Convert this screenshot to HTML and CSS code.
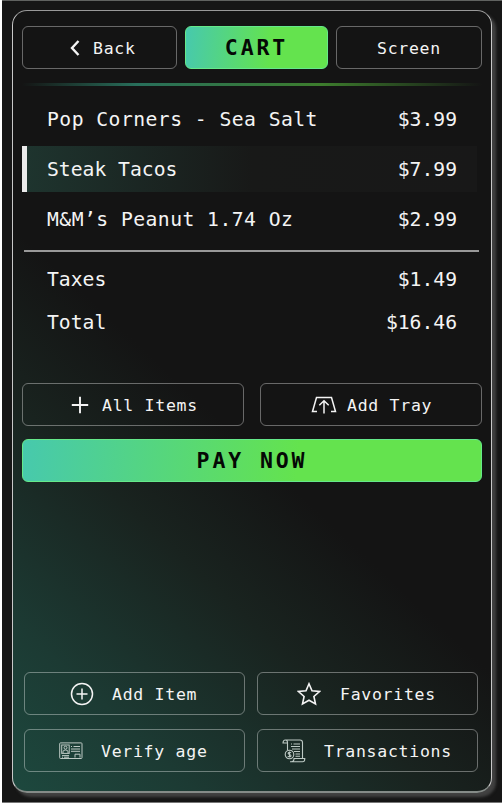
FILE: index.html
```html
<!DOCTYPE html>
<html lang="en">
<head>
<meta charset="utf-8">
<title>Cart</title>
<link rel="stylesheet" href="styles.css">
</head>
<body>
<main class="card">
  <header class="tabs">
    <button class="btn back"><svg width="10" height="16" viewBox="0 0 10 16"><path d="M8.5 1 2 8l6.500 7" stroke-width="2.400"/></svg><span>Back</span></button>
    <button class="btn accent cart">CART</button>
    <button class="btn screen"><span>Screen</span></button>
  </header>
  <div class="glow"></div>
  <section class="items">
    <div class="row"><span class="wide">Pop Corners - Sea Salt</span><span>$3.99</span></div>
    <div class="row selected"><span>Steak Tacos</span><span>$7.99</span></div>
    <div class="row"><span class="wide">M&amp;M’s Peanut 1.74 Oz</span><span>$2.99</span></div>
  </section>
  <section class="totals">
    <div class="row"><span>Taxes</span><span>$1.49</span></div>
    <div class="row"><span>Total</span><span>$16.46</span></div>
  </section>
  <div class="actions">
    <button class="btn all"><svg width="18" height="18" viewBox="0 0 18 18"><path d="M9 .8v16.400M.8 9h16.400" stroke-width="1.900"/></svg><span>All Items</span></button>
    <button class="btn tray"><svg width="26" height="18" viewBox="0 0 26 18"><path d="M6 15.500H1.500L5.500 1.500h15L24.500 15.500H20M13 17.500V5M8.300 9.300 13 4.700l4.700 4.600" stroke-width="1.500"/></svg><span>Add Tray</span></button>
  </div>
  <button class="btn accent pay">PAY NOW</button>
  <footer class="tools">
    <button class="btn add"><svg width="24" height="24" viewBox="0 0 24 24"><circle cx="12" cy="12" r="10.500"/><path d="M12 6.500v11M6.500 12h11"/></svg><span>Add Item</span></button>
    <button class="btn fav"><svg width="24" height="24" viewBox="0 0 24 24"><path d="M12 1.800 15 8.700l7.500.8-5.600 5 1.600 7.400L12 18.200l-6.500 3.700 1.600-7.400-5.600-5 7.500-.8z" stroke-width="1.600"/></svg><span>Favorites</span></button>
    <button class="btn age"><svg width="24" height="18" viewBox="0 0 24 18"><g stroke-width="1"><rect x=".7" y=".9" width="22.300" height="15.600" rx=".8"/><rect x="2.700" y="3" width="7.500" height="8.400"/><circle cx="6.500" cy="5.700" r="1.500"/><path d="M4 11V9.800Q4 8 6.500 8T9 9.800V11M12 4.500h1m1.500 0H21M12 7h9M12 9.300h9M3 13.600h7M3 15.200h1m1 0h5M16 15.500v-3.300h5v3.300"/></g></svg><span>Verify age</span></button>
    <button class="btn trans"><svg width="24" height="24" viewBox="0 0 24 24"><g stroke-width="1.100"><path d="M5.500 11V3.500Q5.500 1 3.300 1T1 4h4.500M3.300 1H18q2.500 0 2.500 2.500V19M8 22.800h12.500q2.300 0 2.300-3.300H12q0 3.300-2.800 3.300M9 5h1m1.500 0H18M9 7.500h9M10 10h8M12 12.500h6M13.500 15H18M13.500 17.300H18"/><circle cx="7.500" cy="15.500" r="4.300"/><path d="M9 14q-.5-.8-1.500-.8T6.100 14.300q0 .9 1.400 1.200T9 16.800q0 1.100-1.500 1.100T6 17M7.500 12.500v6"/></g></svg><span>Transactions</span></button>
  </footer>
</main>
</body>
</html>
```
FILE: styles.css
```css
* { box-sizing: border-box; }

body {
  margin: 0;
  height: 803px;
  padding: 9px 10px 9px;
  overflow: hidden;
  background: #161616;
  border: solid #fff;
  border-width: 0 0 0 2px;
  box-shadow: inset 0 1px #606260, inset 0 -1px #777;
  color: #f4f4f4;
  font-family: "DejaVu Sans Mono", monospace;
}

.card {
  width: 480px;
  height: 783px;
  margin-top: 1px;
  padding: 15px 9px 19px;
  display: flex;
  flex-direction: column;
  border: 1px solid #c8c8c8;
  border-top-color: #999;
  border-bottom: 2px solid #858b88;
  border-radius: 15px;
  background: linear-gradient(43deg, #1d483e 0%, #1c3a33 14%, #19231f 32%, #141414 46%);
  box-shadow: 4px 4px 3px #414141;
}

.btn {
  display: flex;
  align-items: center;
  height: 43px;
  padding: 2px 0 0;
  margin: 0;
  border: 1px solid rgba(255, 255, 255, .36);
  border-radius: 6px;
  background: transparent;
  color: #f4f4f4;
  font: 16.500px "DejaVu Sans Mono", monospace;
  letter-spacing: .72px;
  white-space: pre;
}

.btn svg {
  flex: none;
  margin-top: -2px;
  fill: none;
  stroke: currentColor;
  stroke-width: 1.500;
}

.tabs {
  display: grid;
  grid-template-columns: 155px 143px 146px;
  gap: 8px;
}

.back { padding-left: 47px; gap: 13px; }
.screen { padding-left: 40px; }

.accent {
  justify-content: center;
  padding-top: 0;
  border-color: #65e98a;
  background: linear-gradient(95deg, #47c9ad 0%, #64e34e 60%);
  color: #050805;
  font-size: 21.500px;
  font-weight: bold;
  letter-spacing: 2.900px;
}

.glow {
  height: 3px;
  margin-top: 14px;
  background: linear-gradient(90deg, transparent, #286f5b 25%, #3d7d2d 65%, transparent);
}

.items {
  margin: 9px 3px 0 0;
  padding-bottom: 6px;
  border-bottom: 2px solid #999;
  border-image: linear-gradient(90deg, transparent 3px, #999 3px) 1;
}

.row {
  display: flex;
  justify-content: space-between;
  align-items: center;
  height: 50px;
  padding: 0 22px 0 25px;
  font-size: 19.700px;
  letter-spacing: 0;
}

.wide { letter-spacing: .46px; }

.items .row:first-child { height: 48px; margin-bottom: 3px; }

.selected {
  height: 46px;
  margin: 0 2px 2px 0;
  padding-left: 20px;
  padding-right: 20px;
  border-left: 5px solid #ebebeb;
  background: linear-gradient(90deg, #1e342e, #181918 50%, #181818);
}

.totals { margin: 6px 3px 0 0; }
.totals .row { height: 43px; }
.totals .row:last-child { height: 42px; }

.actions {
  display: grid;
  grid-template-columns: 222px 222px;
  gap: 16px;
  margin-top: 40px;
}

.all { padding-left: 48px; gap: 13px; }
.tray { padding-left: 50px; gap: 10px; }

.pay {
  width: 460px;
  margin-top: 13px;
}

.tools {
  display: grid;
  grid-template-columns: 221px 221px;
  gap: 14px 12px;
  margin: auto 0 0 2px;
}

.add { padding-left: 45px; gap: 18px; }
.fav { padding-left: 39px; gap: 19px; }
.age { padding-left: 34px; gap: 18px; }
.trans { padding-left: 24px; gap: 18px; }
.age svg, .trans svg { color: #bdc9c4; }
```
